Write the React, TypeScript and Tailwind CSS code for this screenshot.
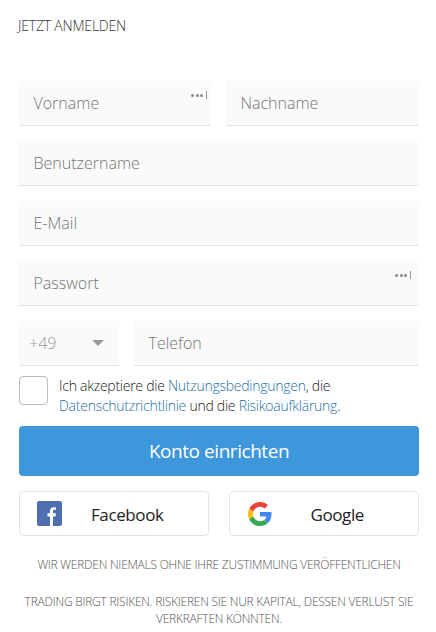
function Dots({ className }: { className: string }) {
  return (
    <span className={`absolute top-[10px] flex items-center gap-[1.5px] ${className}`}>
      <span className="h-[3px] w-[3px] rounded-full bg-[#888]" />
      <span className="h-[3px] w-[3px] rounded-full bg-[#888]" />
      <span className="h-[3px] w-[3px] rounded-full bg-[#888]" />
      <span className="ml-[1.5px] h-[8px] w-px bg-[#999]" />
    </span>
  );
}

function Field({ label, dots, className }: { label: string; dots?: string; className?: string }) {
  return (
    <div className={`relative flex h-[45px] items-center border-b border-[#e2e2e2] bg-[#fafafa] pl-[14.5px] text-[16px] font-light text-[#757575] ${className ?? ''}`}>
      {label}
      {dots && <Dots className={dots} />}
    </div>
  );
}

function FacebookIcon() {
  return (
    <svg width="25" height="25" viewBox="0 0 25 25">
      <rect width="25" height="25" rx="2" fill="#4f6fae" />
      <path d="M16 25v-9.500h2.500l.4-3.200H16v-2c0-.9.3-1.500 1.500-1.500h1.500V6.400c-.3 0-1.200-.1-2.200-.1-2.300 0-3.800 1.400-3.800 3.800v2.200h-2.500v3.200H13V25z" fill="#fff" />
    </svg>
  );
}

function GoogleIcon() {
  return (
    <svg width="24" height="24" viewBox="0 0 48 48">
      <path fill="#EA4335" d="M24 9.500c3.540 0 6.710 1.220 9.210 3.600l6.850-6.850C35.900 2.380 30.470 0 24 0 14.620 0 6.510 5.380 2.560 13.220l7.980 6.190C12.430 13.720 17.740 9.500 24 9.500z" />
      <path fill="#4285F4" d="M46.980 24.550c0-1.570-.15-3.090-.38-4.550H24v9.020h12.940c-.58 2.960-2.260 5.480-4.780 7.180l7.730 6c4.510-4.180 7.090-10.360 7.090-17.650z" />
      <path fill="#FBBC05" d="M10.530 28.590c-.48-1.450-.76-2.990-.76-4.590s.27-3.140.76-4.590l-7.980-6.190C.92 16.460 0 20.120 0 24c0 3.880.92 7.540 2.560 10.780l7.970-6.190z" />
      <path fill="#34A853" d="M24 48c6.480 0 11.930-2.130 15.890-5.810l-7.730-6c-2.150 1.450-4.920 2.300-8.160 2.300-6.260 0-11.570-4.220-13.470-9.910l-7.980 6.190C6.510 42.620 14.620 48 24 48z" />
    </svg>
  );
}

export default function App() {
  return (
    <div className="h-[632px] w-[436px] overflow-hidden bg-white pl-[19px] pr-[17px] font-['Open_Sans',sans-serif]">
      <h1 className="-ml-px pt-[16px] text-[14px] leading-[19px] font-light tracking-[-0.2px] text-[#333]">JETZT ANMELDEN</h1>

      <div className="mt-[46px] flex flex-col gap-[15px]">
        <div className="flex gap-[15px]">
          <Field label="Vorname" dots="right-[4px]" className="w-[192px]" />
          <Field label="Nachname" className="flex-1" />
        </div>
        <Field label="Benutzername" />
        <Field label="E-Mail" />
        <Field label="Passwort" dots="right-[8px]" />
        <div className="flex gap-[15px]">
          <div className="flex h-[45px] w-[100px] items-center justify-between border-b border-[#e2e2e2] bg-[#fafafa] pl-[10px] pr-[15px] text-[16px] font-light text-[#999]">
            +49
            <span className="h-0 w-0 border-x-[6.5px] border-t-[6px] border-x-transparent border-t-[#999]" />
          </div>
          <Field label="Telefon" className="flex-1" />
        </div>
      </div>

      <div className="mt-[10px] flex">
        <div className="h-[29px] w-[29px] shrink-0 rounded-[4px] border border-[#bbb] bg-white" />
        <p className="ml-[11px] text-[14px] leading-[20px] font-light tracking-[-0.26px] text-[#222]">
          Ich akzeptiere die <span className="text-[#1f6fa8]">Nutzungsbedingungen</span>, die
          <br />
          <span className="text-[#1f6fa8]">Datenschutzrichtlinie</span> und die <span className="text-[#1f6fa8]">Risikoaufklärung</span>.
        </p>
      </div>

      <button className="mt-[10px] flex h-[50px] w-full items-center justify-center rounded-[4px] bg-[#3f97db] text-[19px] tracking-[-0.45px] text-white">
        Konto einrichten
      </button>

      <div className="mt-[15px] flex gap-[20px]">
        <button className="flex h-[45px] flex-1 items-center rounded-[4px] border border-[#e4e4e4] bg-white pl-[17px] text-[17px] font-medium tracking-[-0.4px] text-[#222]">
          <FacebookIcon />
          <span className="ml-[29px] pt-[3px]">Facebook</span>
        </button>
        <button className="flex h-[45px] flex-1 items-center rounded-[4px] border border-[#e4e4e4] bg-white pl-[18px] text-[17px] font-medium tracking-[-0.4px] text-[#222]">
          <GoogleIcon />
          <span className="ml-[39px] pt-[3px]">Google</span>
        </button>
      </div>

      <p className="mt-[20px] text-center text-[12px] leading-[17px] font-light tracking-[-0.25px] text-[#555]">
        WIR WERDEN NIEMALS OHNE IHRE ZUSTIMMUNG VERÖFFENTLICHEN
      </p>
      <p className="mt-[20px] text-center text-[12px] leading-[17px] font-light tracking-[-0.25px] text-[#555]">
        TRADING BIRGT RISIKEN. RISKIEREN SIE NUR KAPITAL, DESSEN VERLUST SIE VERKRAFTEN KÖNNTEN.
      </p>
    </div>
  );
}
